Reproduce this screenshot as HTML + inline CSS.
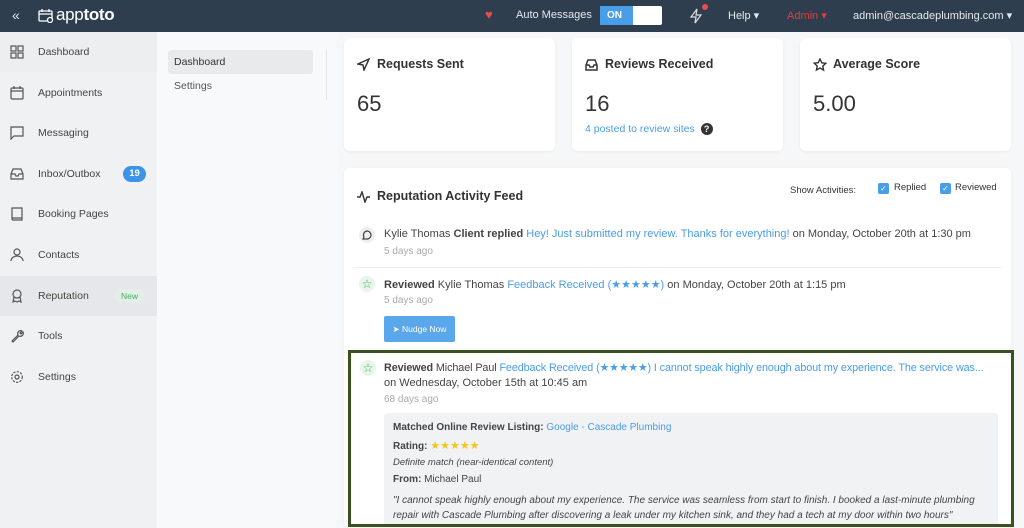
<!DOCTYPE html>
<html><head><meta charset="utf-8"><style>
*{box-sizing:border-box;margin:0;padding:0}
html,body{width:1024px;height:528px;overflow:hidden}
body{font-family:"Liberation Sans",sans-serif;background:#f6f7f8;color:#333;position:relative;font-size:11px}
.top{position:absolute;left:0;top:0;width:1024px;height:32px;background:#2e3e4f;color:#e6e9ec}
.top span{position:absolute;top:9px;font-size:11px}
.side{position:absolute;left:0;top:32px;width:157px;height:496px;background:#f0f1f3}
.si{position:absolute;left:0;width:157px;height:40px;font-size:10.5px;color:#444}
.si .t{position:absolute;left:38px;top:14px}
.si svg{position:absolute;left:10px;top:13px}
.sub{position:absolute;left:157px;top:32px;width:180px;height:496px;background:#f8f9fa}
.card{position:absolute;background:#fff;border-radius:6px;box-shadow:0 1px 3px rgba(0,0,0,.05)}
.ch{position:absolute;left:33px;top:19px;font-size:12.5px;font-weight:bold;color:#333}
.cn{position:absolute;left:13px;top:53px;font-size:22px;color:#333}
.ci{position:absolute;left:13px;top:20px}
.a{color:#4a9de8}
.it{position:absolute;left:40px;font-size:11px;color:#444;white-space:nowrap}
.g{color:#aaa !important;font-size:10px !important}
</style></head><body>
<div class="top">
<span style="left:12px;top:7px;font-size:14px">«</span>
<svg style="position:absolute;left:38px;top:8px" width="16" height="15" viewBox="0 0 16 15" fill="none" stroke="#fff" stroke-width="1.3"><rect x="1" y="3" width="13" height="10" rx="1"/><path d="M1 6h13M4 1v3M11 1v3"/><circle cx="12" cy="12" r="2.5" fill="#2e3e4f"/></svg>
<span style="left:56px;top:5px;font-size:17px;color:#fff;letter-spacing:-.3px">app<b>toto</b></span>
<span style="left:485px;top:7px;color:#e84c4c;font-size:13px">♥</span>
<span style="left:516px">Auto Messages</span>
<div style="position:absolute;left:600px;top:6px;width:62px;height:19px;background:#fff;border-radius:2px"><div style="width:33px;height:19px;background:#4a9de8;color:#fff;font-size:10px;font-weight:bold;padding:4px 0 0 7px">ON</div></div>
<svg style="position:absolute;left:689px;top:8px" width="14" height="16" viewBox="0 0 14 16" fill="none" stroke="#ddd" stroke-width="1.2"><path d="M8 1L2 9h5l-1 6 6-8H7z"/></svg>
<div style="position:absolute;left:702px;top:4px;width:6px;height:6px;border-radius:50%;background:#e84c4c"></div>
<span style="left:728px">Help ▾</span>
<span style="left:787px;color:#e23b3b">Admin ▾</span>
<span style="left:853px">admin@cascadeplumbing.com ▾</span>
</div>
<div class="side">
<div class="si" style="top:0;background:#eceef0"><svg width="14" height="14" fill="none" stroke="#555" stroke-width="1.2"><rect x="1" y="1" width="5" height="5"/><rect x="8" y="1" width="5" height="5"/><rect x="1" y="8" width="5" height="5"/><rect x="8" y="8" width="5" height="5"/></svg><span class="t">Dashboard</span></div>
<div class="si" style="top:41px"><svg width="14" height="14" fill="none" stroke="#555" stroke-width="1.2"><rect x="1" y="2" width="12" height="11" rx="1"/><path d="M1 5h12M4 0v3M10 0v3"/></svg><span class="t">Appointments</span></div>
<div class="si" style="top:81px"><svg width="14" height="14" fill="none" stroke="#555" stroke-width="1.2"><path d="M1 1h12v9H4l-3 3z"/></svg><span class="t">Messaging</span></div>
<div class="si" style="top:122px"><svg width="14" height="14" fill="none" stroke="#555" stroke-width="1.2"><path d="M1 7l2-5h8l2 5v5H1zM1 7h4l1 2h2l1-2h4"/></svg><span class="t">Inbox/Outbox</span><div style="position:absolute;left:123px;top:12px;width:23px;height:16px;border-radius:8px;background:#3d93e6;color:#fff;font-size:9.5px;font-weight:bold;text-align:center;line-height:16px">19</div></div>
<div class="si" style="top:162px"><svg width="14" height="14" fill="none" stroke="#555" stroke-width="1.2"><path d="M2 1h10v12H3a1 1 0 01-1-1zM2 11h10"/></svg><span class="t">Booking Pages</span></div>
<div class="si" style="top:203px"><svg width="14" height="14" fill="none" stroke="#555" stroke-width="1.2"><circle cx="7" cy="4" r="3"/><path d="M1 13c0-3 3-5 6-5s6 2 6 5"/></svg><span class="t">Contacts</span></div>
<div class="si" style="top:244px;background:#e5e7ea"><svg width="14" height="14" fill="none" stroke="#555" stroke-width="1.2"><circle cx="7" cy="5" r="4"/><path d="M4 8l-1 5 2-1 2 1 2-1 2 1-1-5"/></svg><span class="t">Reputation</span><div style="position:absolute;left:114px;top:13px;width:31px;height:14px;border-radius:7px;background:#e3eee6;color:#3cb060;font-size:8.5px;text-align:center;line-height:14px">New</div></div>
<div class="si" style="top:284px"><svg width="14" height="14" fill="none" stroke="#555" stroke-width="1.2"><path d="M2 12l6-6a3 3 0 014-4l-2 2 1 1 2-2a3 3 0 01-4 4l-6 6z"/></svg><span class="t">Tools</span></div>
<div class="si" style="top:325px"><svg width="14" height="14" fill="none" stroke="#555" stroke-width="1.2"><circle cx="7" cy="7" r="2"/><circle cx="7" cy="7" r="5.3" stroke-dasharray="2.2 1.3"/></svg><span class="t">Settings</span></div>
</div>
<div class="sub">
<div style="position:absolute;left:11px;top:18px;width:145px;height:24px;background:#e9eaec;border-radius:3px;font-size:10.5px;padding:6px 0 0 6px;color:#333">Dashboard</div>
<div style="position:absolute;left:17px;top:48px;font-size:10.5px;color:#555">Settings</div>
<div style="position:absolute;left:169px;top:18px;width:1px;height:50px;background:#e5e6e8"></div>
</div>
<div class="card" style="left:344px;top:38px;width:211px;height:113px"><svg class="ci" width="13" height="13" fill="none" stroke="#333" stroke-width="1.5"><path d="M12 1L1 6l5 1 1 5z"/></svg><div class="ch">Requests Sent</div><div class="cn">65</div></div>
<div class="card" style="left:572px;top:38px;width:211px;height:113px"><svg class="ci" width="13" height="13" fill="none" stroke="#333" stroke-width="1.5"><path d="M1 7l2-5h7l2 5v5H1zM1 7h3l1 2h3l1-2h3"/></svg><div class="ch">Reviews Received</div><div class="cn">16</div><div style="position:absolute;left:13px;top:85px;font-size:10.5px" class="a">4 posted to review sites <span style="display:inline-block;width:12px;height:12px;border-radius:50%;background:#333;color:#fff;font-size:9px;text-align:center;line-height:12px;font-weight:bold;margin-left:3px">?</span></div></div>
<div class="card" style="left:800px;top:38px;width:211px;height:113px"><svg class="ci" width="14" height="14" fill="none" stroke="#333" stroke-width="1.4"><path d="M7 1l1.8 3.8 4 .5-3 2.8.8 4L7 10l-3.6 2 .8-4-3-2.8 4-.5z"/></svg><div class="ch">Average Score</div><div class="cn">5.00</div></div>
<div class="card" style="left:344px;top:168px;width:667px;height:360px">
<svg style="position:absolute;left:13px;top:23px" width="14" height="12" fill="none" stroke="#333" stroke-width="1.4"><path d="M0 6h3l2-5 3 10 2-5h3"/></svg>
<div style="position:absolute;left:33px;top:21px;font-size:12.5px;font-weight:bold;color:#333">Reputation Activity Feed</div>
<div style="position:absolute;left:446px;top:17px;font-size:9.5px;color:#333">Show Activities:</div>
<div style="position:absolute;left:534px;top:15px;width:11px;height:11px;background:#4a9de8;border-radius:2px;color:#fff;font-size:8px;text-align:center;line-height:11px">✓</div>
<div style="position:absolute;left:550px;top:14px;font-size:9.5px;color:#333">Replied</div>
<div style="position:absolute;left:596px;top:15px;width:11px;height:11px;background:#4a9de8;border-radius:2px;color:#fff;font-size:8px;text-align:center;line-height:11px">✓</div>
<div style="position:absolute;left:611px;top:14px;font-size:9.5px;color:#333">Reviewed</div>
<div style="position:absolute;left:15px;top:59px;width:16px;height:16px;border-radius:50%;background:#eee"></div><svg style="position:absolute;left:18px;top:62px" width="10" height="10" fill="none" stroke="#444" stroke-width="1.2"><path d="M5 1a4 4 0 110 8H1l1-2a4 4 0 013-6z"/></svg>
<div class="it" style="top:60px">Kylie Thomas <b>Client replied</b> <span class="a">Hey! Just submitted my review. Thanks for everything!</span> on Monday, October 20th at 1:30 pm</div>
<div class="it g" style="top:78px">5 days ago</div>
<div style="position:absolute;left:10px;top:99px;width:648px;height:1px;background:#eee"></div>
<div style="position:absolute;left:15px;top:108px;width:16px;height:16px;border-radius:50%;background:#e8f5ea;color:#3cb060;text-align:center;font-size:12px;line-height:16px">☆</div>
<div class="it" style="top:110px"><b>Reviewed</b> Kylie Thomas <span class="a">Feedback Received (★★★★★)</span> on Monday, October 20th at 1:15 pm</div>
<div class="it g" style="top:127px">5 days ago</div>
<div style="position:absolute;left:40px;top:148px;width:71px;height:26px;background:#5aa7ec;border-radius:2px;color:#fff;font-size:8.5px;text-align:center;line-height:26px">➤ Nudge Now</div>
</div>
<div style="position:absolute;left:348px;top:350px;width:666px;height:177px;border:3px solid #3a5220;background:#fff;overflow:hidden">
<div style="position:absolute;left:9px;top:7px;width:16px;height:16px;border-radius:50%;background:#e8f5ea;color:#3cb060;text-align:center;font-size:12px;line-height:16px">☆</div>
<div style="position:absolute;left:33px;top:8px;font-size:10.8px;color:#444;white-space:nowrap;letter-spacing:-.1px"><b>Reviewed</b> Michael Paul <span class="a">Feedback Received (★★★★★) I cannot speak highly enough about my experience. The service was...</span></div>
<div style="position:absolute;left:33px;top:24px;font-size:11px;color:#444">on Wednesday, October 15th at 10:45 am</div>
<div style="position:absolute;left:33px;top:41px" class="g">68 days ago</div>
<div style="position:absolute;left:33px;top:60px;width:614px;height:120px;background:#f1f2f4;border-radius:4px;font-size:10px;color:#444">
<div style="position:absolute;left:9px;top:9px"><b>Matched Online Review Listing:</b> <span class="a">Google - Cascade Plumbing</span></div>
<div style="position:absolute;left:9px;top:26px"><b>Rating:</b> <span style="color:#f5c518;font-size:11px">★★★★★</span></div>
<div style="position:absolute;left:9px;top:44px;font-style:italic;font-size:9.5px">Definite match (near-identical content)</div>
<div style="position:absolute;left:9px;top:61px"><b>From:</b> Michael Paul</div>
<div style="position:absolute;left:9px;top:80px;width:600px;font-style:italic;line-height:15px">"I cannot speak highly enough about my experience. The service was seamless from start to finish. I booked a last-minute plumbing repair with Cascade Plumbing after discovering a leak under my kitchen sink, and they had a tech at my door within two hours"</div>
</div>
</div>
</body></html>
